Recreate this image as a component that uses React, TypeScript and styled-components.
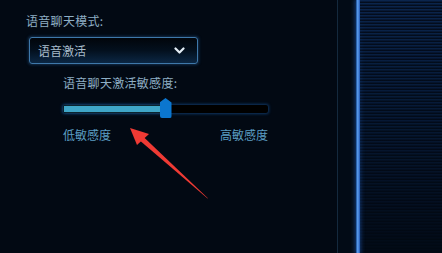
import styled, { createGlobalStyle } from 'styled-components';

const GlobalStyle = createGlobalStyle`
  html, body {
    margin: 0;
    padding: 0;
    background: #020913;
  }
  body {
    font-family: "Noto Sans CJK SC", "Noto Sans", sans-serif;
  }
`;

const Page = styled.div`
  display: flex;
  width: 442px;
  height: 253px;
  overflow: hidden;
  background: #020913;
`;

const Settings = styled.div`
  position: relative;
  flex: 0 0 337px;
  box-sizing: border-box;
  padding: 13px 0 0 26px;
  display: flex;
  flex-direction: column;
`;

const Label = styled.div`
  font-size: 12px;
  line-height: 16px;
  color: #8eaec4;
  letter-spacing: 0.3px;
`;

const Select = styled.div`
  margin: 8px 0 0 3px;
  width: 169px;
  height: 27px;
  box-sizing: border-box;
  display: flex;
  align-items: center;
  justify-content: space-between;
  padding: 0 12px 0 8px;
  border: 1px solid #3e78aa;
  border-radius: 3px;
  background: linear-gradient(to bottom, #01050b 0%, #03101e 50%, #0b2744 100%);
  box-shadow: 0 0 0 1px #0d2036, 0 0 3px 1px rgba(40, 110, 180, 0.35);
  color: #a8bccb;
  font-size: 12px;
`;

const SliderBlock = styled.div`
  margin: 11px 0 0 37px;
  width: 205px;
  display: flex;
  flex-direction: column;
`;

const Track = styled.div`
  position: relative;
  margin-top: 14px;
  height: 8px;
  background: #000;
  border-radius: 2px;
  box-shadow: 0 0 3px 1px rgba(30, 110, 200, 0.45);
`;

const Fill = styled.div`
  position: absolute;
  left: 1px;
  top: 1px;
  height: 6px;
  background: #3fa6c8;
  box-shadow: 0 0 3px rgba(60, 170, 220, 0.6);
`;

const Thumb = styled.div`
  position: absolute;
  top: -7px;
  width: 12px;
  height: 20px;
  margin-left: -6px;
  background: #0b76cf;
  clip-path: polygon(50% 0, 100% 22%, 100% 100%, 0 100%, 0 22%);
  border-radius: 0 0 2px 2px;
`;

const Ends = styled.div`
  display: flex;
  justify-content: space-between;
  margin-top: 14px;
  font-size: 12px;
  line-height: 16px;
  color: #5b9dc2;
`;

const Arrow = styled.svg`
  position: absolute;
  left: 125px;
  top: 124px;
`;

const Divider = styled.div`
  flex: 0 0 18px;
  border-left: 1px solid #14293d;
  background: #020b16;
`;

const GlowLine = styled.div`
  flex: 0 0 4px;
  background: linear-gradient(
    to right,
    #163e78 0,
    #3f86e0 1px,
    #6aa6f0 2px,
    #2a64c0 3px
  );
  box-shadow: 0 0 4px 1px rgba(40, 110, 220, 0.5);
`;

const Stripes = styled.div`
  flex: 1;
  background: repeating-linear-gradient(
    to bottom,
    #0b2750 0,
    #0a234a 1px,
    #041024 2px,
    #030b18 3px
  );
  -webkit-mask-image: linear-gradient(to bottom, #000 0%, rgba(0, 0, 0, 0.5) 55%, rgba(0, 0, 0, 0.05) 100%);
  mask-image: linear-gradient(to bottom, #000 0%, rgba(0, 0, 0, 0.5) 55%, rgba(0, 0, 0, 0.05) 100%);
`;

const value = 0.5;

export default function App() {
  return (
    <>
      <GlobalStyle />
      <Page>
        <Settings>
          <Label>语音聊天模式:</Label>
          <Select>
            <span>语音激活</span>
            <svg width="11" height="8" viewBox="0 0 11 8">
              <path d="M1.5 1.5 L5.5 5.5 L9.5 1.5" fill="none" stroke="#e4eef6" strokeWidth="2.2" strokeLinecap="round" strokeLinejoin="round" />
            </svg>
          </Select>
          <SliderBlock>
            <Label>语音聊天激活敏感度:</Label>
            <Track>
              <Fill style={{ width: `${value * 100}%` }} />
              <Thumb style={{ left: `${value * 100}%` }} />
            </Track>
            <Ends>
              <span>低敏感度</span>
              <span>高敏感度</span>
            </Ends>
          </SliderBlock>
          <Arrow width="90" height="80" viewBox="0 0 90 80">
            <polygon points="16.5,11 13,15 82.6,74.6 82.9,74.2" fill="#ef3a34" />
            <polygon points="5,4 24,10 12,21" fill="#ef3a34" />
          </Arrow>
        </Settings>
        <Divider />
        <GlowLine />
        <Stripes />
      </Page>
    </>
  );
}
